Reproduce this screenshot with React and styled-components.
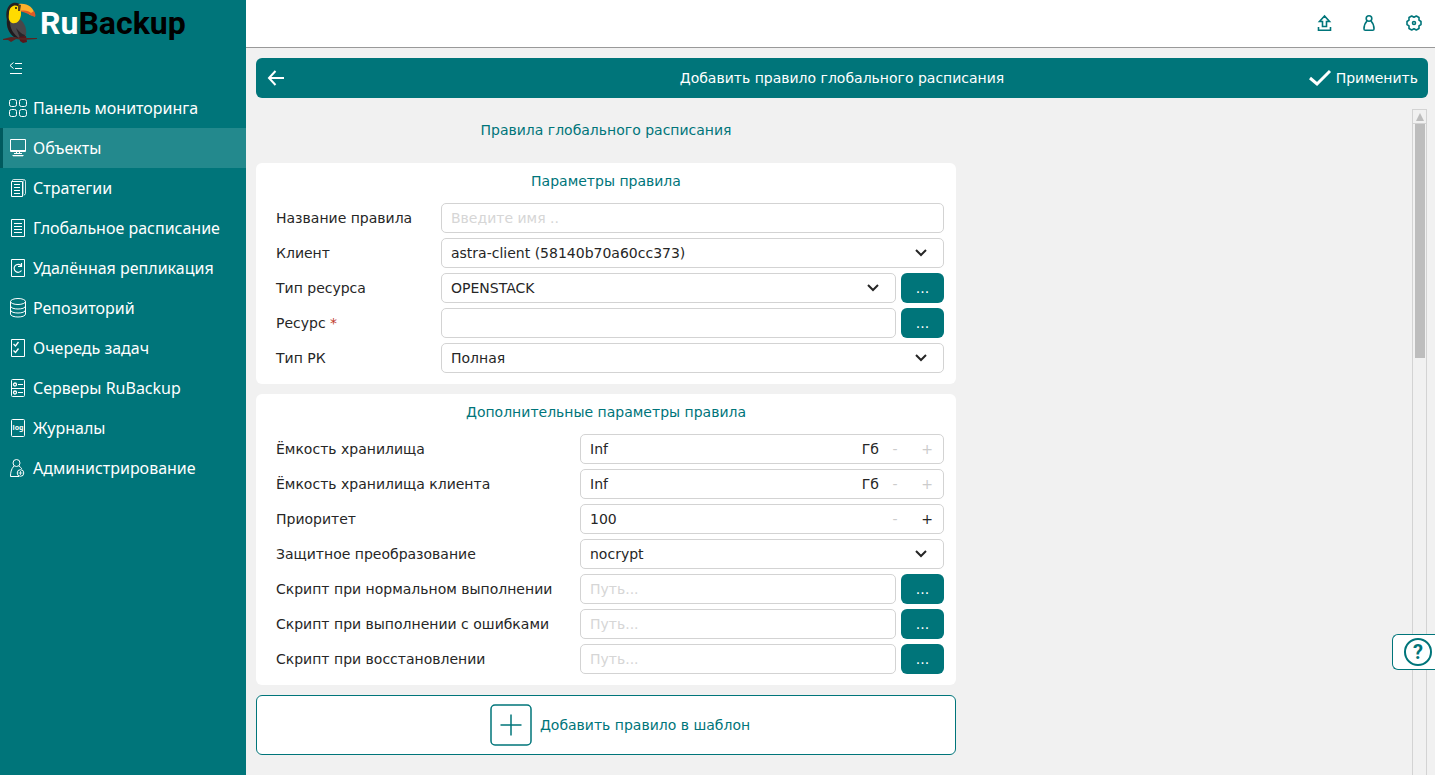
import { useState } from 'react';
import styled, { createGlobalStyle, css } from 'styled-components';

const teal = '#00757a';

const GlobalStyle = createGlobalStyle`
  * {
    box-sizing: border-box;
  }
  body {
    margin: 0;
    overflow: hidden;
    background: #f1f1f1;
    color: #262626;
    font-family: 'DejaVu Sans', sans-serif;
    font-size: 14px;
    line-height: 18px;
  }
  button,
  input,
  select {
    font: inherit;
    color: inherit;
  }
  button {
    padding: 0;
    border: 0;
    background: none;
    cursor: pointer;
  }
`;

const Layout = styled.div`
  display: grid;
  grid-template-columns: 246px minmax(0, 1fr);
  height: 100vh;
`;

const Sidebar = styled.aside`
  display: flex;
  flex-direction: column;
  background: ${teal};
  color: #fff;
  font-family: 'Noto Sans', sans-serif;
  font-size: 16px;
  line-height: 24px;
`;

const Logo = styled.a`
  display: flex;
  align-items: center;
  gap: 2px;
  height: 48px;
  padding: 0 0 2px 3px;
  color: #fff;
  font: bold 32px/40px Roboto, sans-serif;
  text-decoration: none;
`;

const LogoDark = styled.span`
  color: #000;
`;

const CollapseButton = styled.button`
  display: flex;
  align-items: center;
  height: 40px;
  padding-left: 9px;
`;

const Menu = styled.nav`
  display: flex;
  flex-direction: column;
`;

const MenuItem = styled.a`
  display: flex;
  align-items: center;
  gap: 5px;
  height: 40px;
  padding-left: 5px;
  border-left: 3px solid transparent;
  color: #fff;
  text-decoration: none;
  white-space: nowrap;

  ${({ $active }) =>
    $active &&
    css`
      background: #23898d;
      border-left-color: #005a5e;
    `}
`;

const Main = styled.div`
  display: flex;
  flex-direction: column;
  min-width: 0;
  min-height: 0;
`;

const TopBar = styled.header`
  display: flex;
  justify-content: flex-end;
  align-items: center;
  gap: 25px;
  height: 48px;
  padding: 0 11px 2px 0;
  border-bottom: 1px solid #999;
  background: #fff;
  color: ${teal};
`;

const IconButton = styled.button`
  display: flex;
  color: inherit;
`;

const Page = styled.main`
  display: flex;
  flex: 1;
  flex-direction: column;
  gap: 11px;
  min-height: 0;
  padding: 10px 7px 0 10px;
`;

const ActionBar = styled.div`
  display: grid;
  grid-template-columns: 1fr auto 1fr;
  align-items: center;
  flex-shrink: 0;
  height: 40px;
  padding: 0 10px;
  border-radius: 6px;
  background: ${teal};
  color: #fff;
`;

const ApplyButton = styled.button`
  display: flex;
  justify-self: end;
  align-items: center;
  gap: 4px;
`;

const BarTitle = styled.h1`
  margin: 0;
  font: inherit;
`;

const Scroller = styled.div`
  display: flex;
  flex: 1;
  justify-content: space-between;
  min-height: 0;
  padding-right: 1px;
`;

const Form = styled.form`
  display: flex;
  flex: 1;
  flex-direction: column;
  gap: 10px;
  max-width: 700px;
  overflow: hidden;
`;

const FormTitle = styled.h2`
  flex-shrink: 0;
  margin: 0;
  padding: 12px 0 14px;
  color: ${teal};
  font: inherit;
  text-align: center;
`;

const Card = styled.fieldset`
  display: flex;
  flex-direction: column;
  flex-shrink: 0;
  gap: 5px;
  margin: 0;
  padding: 9px 12px 11px 20px;
  border: 0;
  border-radius: 6px;
  background: #fff;
`;

const CardTitle = styled.h3`
  margin: 0 8px 8px 0;
  color: ${teal};
  font: inherit;
  text-align: center;
`;

const Row = styled.div`
  display: grid;
  grid-template-columns: ${({ $label }) => $label}px minmax(0, 1fr) auto;
  align-items: center;
`;

const Required = styled.span`
  color: #c0392b;
`;

const control = css`
  width: 100%;
  height: 30px;
  border: 1px solid #d3d3d3;
  border-radius: 5px;
  background: #fff;
`;

const TextInput = styled.input`
  ${control}
  padding: 0 9px;
  outline: 0;

  &::placeholder {
    color: #d6d6d6;
    opacity: 1;
  }
`;

const SelectBox = styled.div`
  position: relative;
`;

const Select = styled.select`
  ${control}
  padding: 0 40px 0 9px;
  appearance: none;
`;

const SelectArrow = styled.svg`
  position: absolute;
  top: 11px;
  right: 17px;
  pointer-events: none;
`;

const SpinBox = styled.div`
  ${control}
  display: flex;
  align-items: center;
`;

const SpinInput = styled.input`
  flex: 1;
  min-width: 0;
  padding: 0 9px;
  border: 0;
  outline: 0;
  background: none;
`;

const SpinButton = styled.button`
  width: 32px;

  &:disabled {
    color: #ccc;
    cursor: default;
  }
`;

const BrowseButton = styled.button`
  width: 43px;
  height: 30px;
  margin-left: 5px;
  border-radius: 6px;
  background: ${teal};
  color: #fff;
`;

const TemplateButton = styled.button`
  display: flex;
  flex-shrink: 0;
  justify-content: center;
  align-items: center;
  gap: 8px;
  height: 60px;
  padding-left: 28px;
  border: 1px solid ${teal};
  border-radius: 6px;
  background: #fff;
  color: ${teal};
`;

const ScrollTrack = styled.div`
  display: flex;
  flex-direction: column;
  align-items: center;
  width: 15px;
  border: 1px solid #d3d3d3;
  border-bottom: 0;
`;

const ScrollUp = styled.button`
  display: flex;
  justify-content: center;
  align-items: center;
  width: 100%;
  height: 14px;
  border-bottom: 1px solid #d3d3d3;
`;

const ScrollThumb = styled.div`
  width: 10px;
  height: 234px;
  background: #bdbdbd;
`;

const HelpButton = styled.button`
  position: fixed;
  right: 0;
  bottom: 105px;
  display: flex;
  align-items: center;
  width: 43px;
  height: 36px;
  padding-left: 11px;
  border: 1px solid ${teal};
  border-right: 0;
  border-radius: 6px 0 0 6px;
  background: #fff;
  color: ${teal};
`;

const HelpMark = styled.span`
  width: 28px;
  height: 28px;
  border: 2px solid ${teal};
  border-radius: 50%;
  font: bold 20px/24px Roboto, sans-serif;
`;

const LogText = styled.text`
  fill: currentColor;
  stroke: none;
  font: bold 7px 'Noto Sans', sans-serif;
`;

function Toucan() {
  return (
    <svg width="35" height="42" viewBox="0 0 35 42" aria-hidden="true">
      <path d="M4 18C3 25 6 31 11 35L18 37L22 36C24 31 24 24 18 18L11 17Z" fill="#4a474a" />
      <path d="M4 17C3 25 6 31 11 35L17 37C10 32 7 26 7 20Z" fill="#1f1a1e" />
      <path d="M13 26C16 29 18 32 22 33L23 30L21 36L17 36Z" fill="#2a2529" />
      <path d="M16 35L23 34L24 40L20 41L17 39Z" fill="#57171b" />
      <path d="M0 37L8 35L19 36L34 36V37L20 38L13 37L8 40L5 38L0 38Z" fill="#5a2422" />
      <path d="M5 11C5 5 9 2 14 3L18 5L18 13C17 19 14 22 9 21C6 19 4 16 5 11Z" fill="#ffdb00" />
      <path d="M4 18C2 11 4 3 10 1C14 0 17 2 19 4L16 5C12 2 7 4 6 10C6 14 5 16 7 20Z" fill="#251f20" />
      <path d="M16 2C24 1 31 5 32 14L27 13C24 10 20 9 16 9C15 7 15 4 16 2Z" fill="#ffb12c" />
      <path d="M17 9C22 8 26 9 28 11L31 9C32 11 33 13 32 15C28 14 26 12 23 11Z" fill="#df5a28" />
      <path d="M15 2L18 3L17 9H15Z" fill="#57401d" />
      <circle cx="13" cy="6" r="1" fill="#111" />
    </svg>
  );
}

const iconPaths = {
  dashboard: (
    <>
      <rect x="1.5" y="1.5" width="7" height="7" rx="2" />
      <rect x="11.5" y="1.5" width="7" height="7" rx="2" />
      <rect x="1.5" y="11.5" width="7" height="7" rx="2" />
      <rect x="11.5" y="11.5" width="7" height="7" rx="2" />
    </>
  ),
  objects: (
    <>
      <path d="M2.5 1.5h15v12h-15zM2.5 12.5h15M8.5 14v2M11.5 14v2" />
      <path d="M6 15.5h8M4.500 17.500h11" />
      <path d="M5 18h10" opacity="0.6" />
    </>
  ),
  strategies: (
    <>
      <path d="M3.5 3.5h11v15h-11zM6 6.5h6M6 9.5h6M6 12.5h6M6 15.5h6" />
      <path d="M4.5 3.500v-1q0-1 1-1h10q2 0 2 2v12q0 1.500-2 1.500" opacity="0.8" />
      <path d="M15.5 2v14" opacity="0.4" />
    </>
  ),
  schedule: (
    <>
      <path d="M3.5 1.5h13v17h-13z" />
      <path d="M6 5.5h8M6 8.5h8M6 11.5h8M6 14.5h8" />
    </>
  ),
  replication: (
    <>
      <path d="M3.5 1.5h13v17h-13z" />
      <path d="M13.5 12.5a4 4 0 1 1-.5-5M13.500 5v3.500H10" strokeWidth="1.2" />
    </>
  ),
  repository: (
    <>
      <ellipse cx="10" cy="3.5" rx="7.5" ry="3" />
      <path d="M2.5 3.500v12.500c0 4 15 4 15 0V3.500M2.500 8c0 4 15 4 15 0M2.500 12c0 4 15 4 15 0" />
    </>
  ),
  queue: (
    <>
      <path d="M3.5 1.5h13v17h-13z" />
      <path d="M5.5 6l2 2 3-4M5.5 12.5l2 2 3-4" strokeWidth="1.3" />
    </>
  ),
  servers: (
    <>
      <rect x="3.5" y="1.5" width="13" height="17" rx="1" />
      <path d="M3.5 10.500h13M10 6.500h5M10 14.500h5" strokeWidth="1.2" />
      <circle cx="7" cy="6.5" r="1.5" strokeWidth="1.3" />
      <circle cx="7" cy="14.5" r="1.5" strokeWidth="1.3" />
    </>
  ),
  logs: (
    <>
      <rect x="3.5" y="1.5" width="13" height="17" rx="1" />
      <LogText x="10" y="12" textAnchor="middle">
        log
      </LogText>
    </>
  ),
  admin: (
    <>
      <circle cx="8.5" cy="5" r="3.5" />
      <path d="M6 8C3 11 2.500 15 2.500 18.500H11M11 8c1.500 1 2.300 2 2.800 3" />
      <circle cx="12.5" cy="15" r="3.300" />
      <path d="M12.5 13v4M10.500 15h4" opacity="0.8" />
    </>
  ),
};

function MenuIcon({ name }) {
  return (
    <svg width="20" height="20" viewBox="0 0 20 20" fill="none" stroke="currentColor" aria-hidden="true">
      {iconPaths[name]}
    </svg>
  );
}

const menu = [
  { icon: 'dashboard', text: 'Панель мониторинга' },
  { icon: 'objects', text: 'Объекты', active: true },
  { icon: 'strategies', text: 'Стратегии' },
  { icon: 'schedule', text: 'Глобальное расписание' },
  { icon: 'replication', text: 'Удалённая репликация' },
  { icon: 'repository', text: 'Репозиторий' },
  { icon: 'queue', text: 'Очередь задач' },
  { icon: 'servers', text: 'Серверы RuBackup' },
  { icon: 'logs', text: 'Журналы' },
  { icon: 'admin', text: 'Администрирование' },
];

function Field({ id, label, width, required, browse, children }) {
  return (
    <Row $label={width}>
      <label htmlFor={id}>
        {label}
        {required && <Required> *</Required>}
      </label>
      {children}
      {browse && (
        <BrowseButton type="button" aria-label={`${label}: выбрать`}>
          ...
        </BrowseButton>
      )}
    </Row>
  );
}

function SelectField({ id, options, ...rest }) {
  return (
    <Field id={id} {...rest}>
      <SelectBox>
        <Select id={id}>
          {options.map((option) => (
            <option key={option}>{option}</option>
          ))}
        </Select>
        <SelectArrow width="12" height="8" viewBox="0 0 12 8" fill="none" stroke="#262626" strokeWidth="2">
          <path d="M1 1l5 5 5-5" />
        </SelectArrow>
      </SelectBox>
    </Field>
  );
}

function InputField({ id, placeholder, ...rest }) {
  return (
    <Field id={id} {...rest}>
      <TextInput id={id} placeholder={placeholder} />
    </Field>
  );
}

function SpinField({ id, initial, unit, ...rest }) {
  const [value, setValue] = useState(initial);
  const locked = value === 'Inf';

  return (
    <Field id={id} {...rest}>
      <SpinBox>
        <SpinInput id={id} value={value} onChange={(e) => setValue(e.target.value)} />
        {unit && <span>{unit}</span>}
        <SpinButton
          type="button"
          aria-label="Уменьшить"
          disabled={locked || Number(value) <= 100}
          onClick={() => setValue(Number(value) - 1)}
        >
          -
        </SpinButton>
        <SpinButton
          type="button"
          aria-label="Увеличить"
          disabled={locked}
          onClick={() => setValue(Number(value) + 1)}
        >
          +
        </SpinButton>
      </SpinBox>
    </Field>
  );
}

function App() {
  return (
    <Layout>
      <GlobalStyle />
      <Sidebar>
        <Logo href="#">
          <Toucan />
          <span>
            Ru<LogoDark>Backup</LogoDark>
          </span>
        </Logo>
        <CollapseButton type="button" aria-label="Свернуть меню">
          <svg width="14" height="14" viewBox="0 0 14 14" fill="none" stroke="currentColor">
            <path d="M4.5 1.5L1 4.500l3.500 3M6 2.500h7M6 7.500h7M1 12.500h12" />
          </svg>
        </CollapseButton>
        <Menu>
          {menu.map(({ icon, text, active }) => (
            <MenuItem key={icon} href="#" $active={active}>
              <MenuIcon name={icon} />
              {text}
            </MenuItem>
          ))}
        </Menu>
      </Sidebar>

      <Main>
        <TopBar>
          <IconButton type="button" aria-label="Загрузить">
            <svg width="20" height="20" viewBox="0 0 20 20" fill="none" stroke="currentColor" strokeWidth="1.6">
              <path d="M10.5 3L5.500 8.500H8.500v5h4v-5h3zM4.500 14v3.200h12V14" />
            </svg>
          </IconButton>
          <IconButton type="button" aria-label="Пользователь">
            <svg width="20" height="20" viewBox="0 0 20 20" fill="none" stroke="currentColor" strokeWidth="1.6">
              <circle cx="10" cy="5.500" r="2.800" />
              <path d="M8 8C6 10 5 13 5 16q0 1.300 1.300 1.300h7.400q1.300 0 1.300-1.300c0-3-1-6-3-8" />
            </svg>
          </IconButton>
          <IconButton type="button" aria-label="Настройки">
            <svg width="20" height="20" viewBox="0 0 20 20" fill="none" stroke="currentColor" strokeWidth="1.6">
              <path
                d="M17 8.500v3L15 12.800v2.700L12.300 17L10 15.800L7.700 17L5 15.500v-2.700L3 11.500v-3L5 7.200V4.500L7.700 3L10 4.200L12.300 3L15 4.500v2.700z"
                strokeLinejoin="round"
              />
              <circle cx="10" cy="10" r="1.500" />
            </svg>
          </IconButton>
        </TopBar>

        <Page>
          <ActionBar>
            <IconButton type="button" aria-label="Назад">
              <svg width="20" height="20" viewBox="0 0 20 20" fill="none" stroke="currentColor" strokeWidth="2">
                <path d="M9.5 3L3 10l6.500 7M3 10h15" />
              </svg>
            </IconButton>
            <BarTitle>Добавить правило глобального расписания</BarTitle>
            <ApplyButton type="button">
              <svg width="24" height="18" viewBox="0 0 24 18" fill="none" stroke="currentColor" strokeWidth="3">
                <path d="M2 9l7 6L22 2" />
              </svg>
              Применить
            </ApplyButton>
          </ActionBar>

          <Scroller>
            <Form>
              <FormTitle>Правила глобального расписания</FormTitle>

              <Card>
                <CardTitle>Параметры правила</CardTitle>
                <InputField id="name" label="Название правила" width={165} placeholder="Введите имя .." />
                <SelectField id="client" label="Клиент" width={165} options={['astra-client (58140b70a60cc373)']} />
                <SelectField id="type" label="Тип ресурса" width={165} options={['OPENSTACK']} browse />
                <InputField id="resource" label="Ресурс" width={165} required browse />
                <SelectField id="backup" label="Тип РК" width={165} options={['Полная']} />
              </Card>

              <Card>
                <CardTitle>Дополнительные параметры правила</CardTitle>
                <SpinField id="storage" label="Ёмкость хранилища" width={304} initial="Inf" unit="Гб" />
                <SpinField id="clientStorage" label="Ёмкость хранилища клиента" width={304} initial="Inf" unit="Гб" />
                <SpinField id="priority" label="Приоритет" width={304} initial="100" />
                <SelectField id="crypt" label="Защитное преобразование" width={304} options={['nocrypt']} />
                <InputField id="ok" label="Скрипт при нормальном выполнении" width={304} placeholder="Путь..." browse />
                <InputField id="fail" label="Скрипт при выполнении с ошибками" width={304} placeholder="Путь..." browse />
                <InputField id="restore" label="Скрипт при восстановлении" width={304} placeholder="Путь..." browse />
              </Card>

              <TemplateButton type="button">
                <svg width="42" height="42" viewBox="0 0 42 42" fill="none" stroke="currentColor" strokeWidth="1.5">
                  <rect x="1" y="1" width="40" height="40" rx="4" />
                  <path d="M21 10.500v21M10.500 21h21" />
                </svg>
                Добавить правило в шаблон
              </TemplateButton>
            </Form>

            <ScrollTrack>
              <ScrollUp type="button" aria-label="Прокрутить вверх">
                <svg width="8" height="8" viewBox="0 0 8 8" fill="#bdbdbd">
                  <path d="M4 0l4 8H0z" />
                </svg>
              </ScrollUp>
              <ScrollThumb />
            </ScrollTrack>
          </Scroller>
        </Page>
      </Main>

      <HelpButton type="button" aria-label="Справка">
        <HelpMark>?</HelpMark>
      </HelpButton>
    </Layout>
  );
}

export default App;
